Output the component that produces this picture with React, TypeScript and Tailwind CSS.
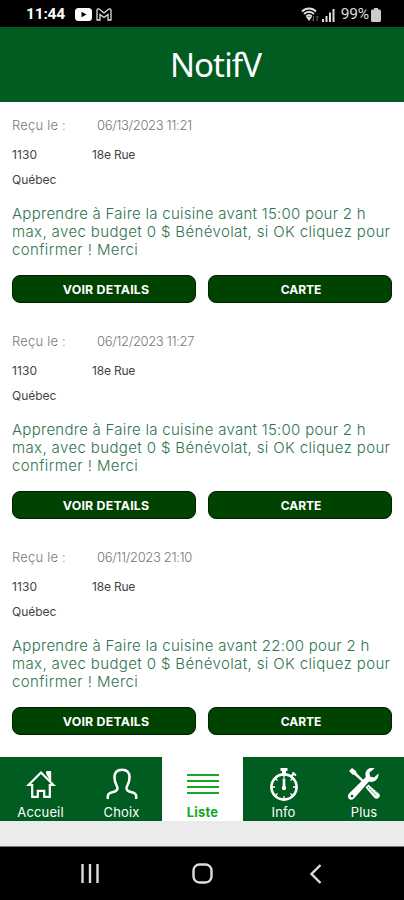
const notifications = [
  { id: 1, received: '06/13/2023 11:21', number: '1130', street: '18e Rue', city: 'Québec', time: '15:00' },
  { id: 2, received: '06/12/2023 11:27', number: '1130', street: '18e Rue', city: 'Québec', time: '15:00' },
  { id: 3, received: '06/11/2023 21:10', number: '1130', street: '18e Rue', city: 'Québec', time: '22:00' },
];

function HomeIcon() {
  return (
    <svg width="30" height="30" viewBox="0 0 30 30" fill="none" stroke="#fff" strokeWidth="2.200">
      <path d="M15 3.500 2.500 16h3.700v11.800h5.600v-6h6.400v6h5.600V16h3.700Z" />
      <path d="M20.500 4.500v-2h4.200v9.500Z" fill="#fff" strokeWidth="1" />
    </svg>
  );
}

function PersonIcon() {
  return (
    <svg width="32" height="32" viewBox="0 0 32 32" fill="none" stroke="#fff" strokeWidth="2.500">
      <path d="M1.800 31v-2.500c0-3 2-3.800 4.500-4.300 3.200-.7 5.200-1.800 5.200-4.300 0-2-3-4.200-3-10.500C8.500 4.800 11 1.700 16 1.700s7.500 3.100 7.500 7.700c0 6.300-3 8.500-3 10.500 0 2.500 2 3.600 5.200 4.300 2.500.5 4.500 1.300 4.500 4.300V31" />
    </svg>
  );
}

function ListIcon() {
  return (
    <svg width="32" height="22" viewBox="0 0 32 22" stroke="#16a822" strokeWidth="2">
      <path d="M0 2h32M0 8h32M0 14h32M0 20h32" />
    </svg>
  );
}

function TimerIcon() {
  return (
    <svg width="30" height="34" viewBox="0 0 30 34" fill="none" stroke="#fff">
      <circle cx="15" cy="20" r="12.600" strokeWidth="2.600" />
      <path d="M15 8v3M15 29v3M3 20h3M24 20h3M6.500 11.500l2 2M21.500 26.500l2 2M6.500 28.500l2-2M21.500 13.500l2-2" strokeWidth="1.300" />
      <path d="M15 3v4" strokeWidth="4" />
      <path d="M11.500 2.500h7" strokeWidth="3" />
      <path d="m22.500 9 3-3M23.500 5.500l3.500 3" strokeWidth="2" />
      <path d="M15 11.500v9" strokeWidth="2.600" />
      <circle cx="15" cy="21" r="2.200" fill="#fff" stroke="none" />
    </svg>
  );
}

function ToolsIcon() {
  return (
    <svg width="34" height="34" viewBox="0 0 34 34">
      <path d="m2 4 3-3 4 3 .5 2L19 15.500l-1.500 1.500L7.500 8l-2-.5Z" fill="#fff" />
      <path d="m18.500 20.500 3-3 10.500 9c2.500 3-1.500 7-4.500 4.500Z" fill="#fff" />
      <path d="m21 20 8 8.500M23 18.500l8 8" stroke="#005c20" strokeWidth=".9" strokeDasharray="1.500 1" />
      <path d="M27.500 1.500c-4-1.500-8.500.5-9 5-.2 1.400 0 2.500.3 3.600L2 26.500c-3.500 4 1.500 8.500 5 5L22 14.500c4.500 1.500 10-1.500 9.500-8l-4.500 4-4-1-.5-4Z" fill="#fff" />
      <circle cx="5" cy="29" r="1.300" fill="#005c20" />
    </svg>
  );
}

const tabs = [
  { label: 'Accueil', icon: <HomeIcon /> },
  { label: 'Choix', icon: <PersonIcon /> },
  { label: 'Liste', icon: <ListIcon />, active: true },
  { label: 'Info', icon: <TimerIcon /> },
  { label: 'Plus', icon: <ToolsIcon /> },
];

function StatusBar() {
  return (
    <div className="h-[27px] bg-black text-white flex items-center pl-[26px] pr-[23px] pt-0.5 font-[Roboto]">
      <span className="w-[49px] text-[15.5px] font-bold tracking-[-0.2px]">11:44</span>
      <svg width="17" height="13" viewBox="0 0 17 13">
        <rect width="17" height="13" rx="3.500" fill="#fff" />
        <path d="M6.500 3.800v5.400l5-2.700Z" fill="#000" />
      </svg>
      <svg className="ml-1" width="16" height="13" viewBox="0 0 16 13" fill="none" stroke="#ddd" strokeWidth="1.300">
        <path d="M1 12V2.500C1 .8 2.500.5 3.500 1.200L8 5l4.500-3.800C13.500.5 15 .8 15 2.500V12h-3V6.500L8 9.500l-4-3V12Z" />
      </svg>
      <svg className="ml-auto" width="18" height="15" viewBox="0 0 18 15" fill="none" stroke="#ddd" strokeWidth="1.800">
        <path d="M1 4.500c4-4 10-4 14 0M3 7c3-3 7-3 10 0M5.300 9.300c1.500-1.500 4-1.500 5.400 0" />
        <path d="M8 12.500 6.500 10.500h3Z" fill="#ddd" />
        <path d="M12.500 9v5m-1.500-1.500 1.500 1.500M16 14V9m0 0 1.500 1.500" stroke="#777" strokeWidth=".9" />
      </svg>
      <svg className="ml-[3px]" width="13" height="14" viewBox="0 0 13 14" fill="#ddd">
        <path d="M0 11h2v3H0zM3.500 8h2v6h-2zM7 4.500h2V14H7zM10.500 1h2v13h-2z" />
      </svg>
      <span className="ml-[6px] text-[15.5px] text-[#ddd] tracking-[-0.2px]">99%</span>
      <svg className="ml-[2px]" width="10" height="14" viewBox="0 0 10 14" fill="#ccc">
        <path d="M3 0h4v1.500h1.500A1.500 1.500 0 0 1 10 3v9.500A1.500 1.500 0 0 1 8.500 14h-7A1.500 1.500 0 0 1 0 12.500V3a1.500 1.500 0 0 1 1.500-1.500H3Z" />
      </svg>
    </div>
  );
}

export default function App() {
  return (
    <main className="w-[404px] h-[900px] bg-white flex flex-col overflow-hidden font-[Inter,sans-serif]">
      <StatusBar />
      <header className="h-[75px] bg-[#005c20] flex items-center justify-center pl-[27px]">
        <h1 className="font-['Noto_Sans',sans-serif] text-[33px] leading-none tracking-[-0.9px] text-white">NotifV</h1>
      </header>

      <section className="h-[655px]">
        {notifications.map((n) => (
          <article key={n.id} className="h-[216px] px-3 pt-[14px]">
            <div className="flex h-[19px] items-center text-[13px] font-light text-[#777]">
              <span className="w-[85px] tracking-[0.2px]">Reçu le :</span>
              <span className="tracking-[-0.35px]">{n.received}</span>
            </div>
            <div className="mt-[11px] flex h-[18px] items-center text-[12px] text-[#444]">
              <span className="w-20 tracking-[0.1px]">{n.number}</span>
              <span className="tracking-[-0.2px]">{n.street}</span>
            </div>
            <p className="mt-[7px] h-[18px] text-[12px] leading-[18px] text-[#444]">{n.city}</p>
            <p className="mt-4 text-[15px] leading-[18px] font-light text-[#30744f] whitespace-nowrap">
              <span className="block tracking-[0.27px]">Apprendre à Faire la cuisine avant {n.time} pour 2 h</span>
              <span className="block tracking-[0.37px]">max, avec budget 0 $ Bénévolat, si OK cliquez pour</span>
              <span className="block tracking-[0.4px]">confirmer ! Merci</span>
            </p>
            <div className="mt-4 grid grid-cols-2 gap-3">
              <button className="h-7 rounded-lg border border-[#002000] bg-[#004200] text-[12px] font-bold tracking-[0.2px] text-white">
                <span className="relative top-px left-0.5 inline-block scale-x-[1.03]">VOIR DETAILS</span>
              </button>
              <button className="h-7 rounded-lg border border-[#002000] bg-[#004200] text-[12px] font-bold text-white">
                <span className="relative top-px left-px">CARTE</span>
              </button>
            </div>
          </article>
        ))}
      </section>

      <nav className="h-16 grid grid-cols-[81px_81px_81px_81px_80px] shrink-0">
        {tabs.map((tab) => (
          <a
            key={tab.label}
            className={`flex flex-col items-center text-[13px] leading-4 ${tab.active ? 'bg-white font-bold tracking-[0.2px] text-[#16a822]' : 'bg-[#005c20] tracking-[0.15px] text-white'}`}
          >
            <span className="flex h-[47px] items-center justify-center pt-[6px]">{tab.icon}</span>
            {tab.label}
          </a>
        ))}
      </nav>
      <div className="h-[26px] bg-[#ebebeb] border-b border-[#777]" />

      <footer className="h-[53px] bg-black">
        <svg width="404" height="53" viewBox="0 0 404 53" fill="none" stroke="#ddd" strokeWidth="2.400">
          <path d="M82.500 17v19M90 17v19M97.500 17v19" />
          <rect x="193.500" y="17.500" width="18" height="18" rx="6" />
          <path d="m320.500 18-9 9 9 9" />
        </svg>
      </footer>
    </main>
  );
}
